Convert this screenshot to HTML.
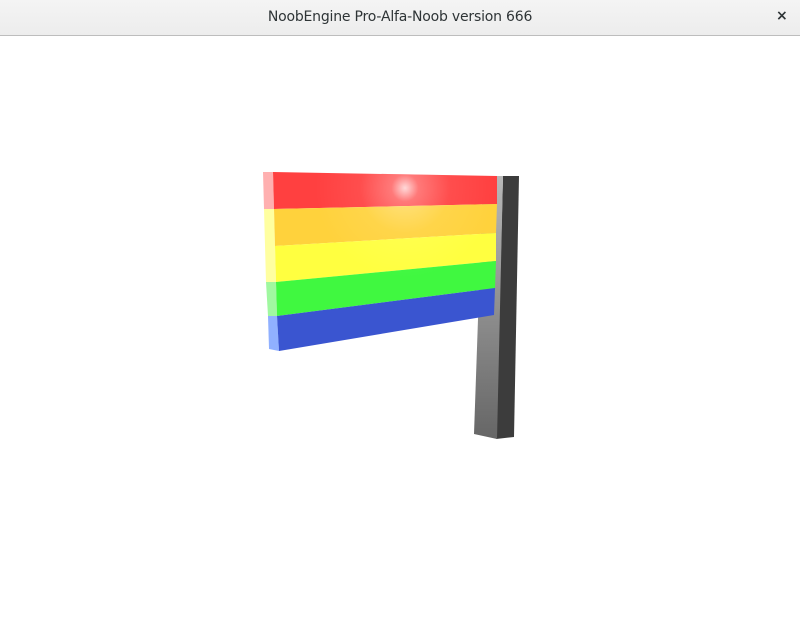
<!DOCTYPE html>
<html><head><meta charset="utf-8"><style>
html,body{margin:0;padding:0;width:800px;height:637px;background:#fff;overflow:hidden}
.bar{position:absolute;left:0;top:0;width:800px;height:36px;background:linear-gradient(#f4f4f4,#ededed);border-bottom:1px solid #bdbdbd;box-sizing:border-box}
.t{position:absolute;left:0;width:800px;top:9px;text-align:center;font:14px "DejaVu Sans","Liberation Sans",sans-serif;color:#2e3436;letter-spacing:-0.2px}
.x{position:absolute;left:776px;top:8px;font:bold 14px "DejaVu Sans",sans-serif;color:#2e3436}
svg{position:absolute;left:0;top:0}
</style></head><body>
<div class="bar"><div class="t">NoobEngine Pro-Alfa-Noob version 666</div><div class="x">×</div></div>
<svg width="800" height="637" viewBox="0 0 800 637">
<defs>
<linearGradient id="pf" x1="0" y1="0" x2="0" y2="1"><stop offset="0" stop-color="#b8b8b8"/><stop offset="1" stop-color="#666"/></linearGradient>
<radialGradient id="hl" cx="405" cy="188" r="90" gradientUnits="userSpaceOnUse"><stop offset="0" stop-color="#fff" stop-opacity="0.8"/><stop offset="0.15" stop-color="#fff" stop-opacity="0.3"/><stop offset="0.5" stop-color="#fff" stop-opacity="0.07"/><stop offset="1" stop-color="#fff" stop-opacity="0"/></radialGradient>
</defs>
<polygon points="503,176 519,176 514,437 496,439" fill="#3c3c3c"/>
<polygon points="483,176 503,176 497,439 474,434" fill="url(#pf)"/>
<polygon points="263,172 273,172 274,209 264,209" fill="#ffb0b0"/>
<polygon points="264,209 274,209 276,282 266,282" fill="#ffffa0"/>
<polygon points="266,282 276,282 277,316 268,316" fill="#a0f8a0"/>
<polygon points="268,316 277,316 279,351 269,349" fill="#90b0ff"/>
<polygon points="273,172 497,176 497,204 274,209" fill="#ff4040"/>
<polygon points="274,209 497,204 496,233 275,246" fill="#ffd23c"/>
<polygon points="275,246 496,233 496,261 276,282" fill="#ffff40"/>
<polygon points="276,282 496,261 495,288 277,316" fill="#40f840"/>
<polygon points="277,316 495,288 494,315 279,351" fill="#3a55d0"/>
<polygon points="273,172 497,176 494,315 279,351" fill="url(#hl)"/>
</svg>
</body></html>
